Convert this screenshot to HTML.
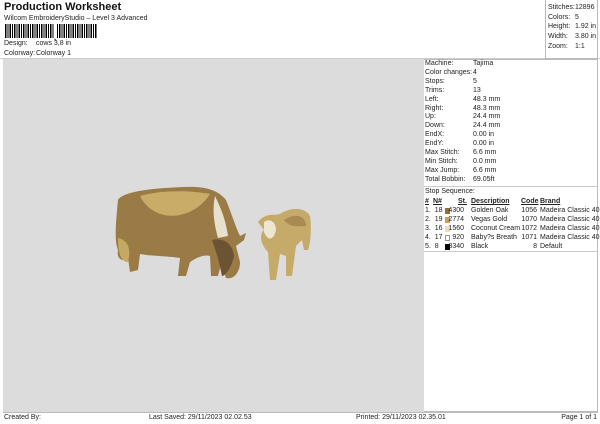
<!DOCTYPE html>
<html><head><meta charset="utf-8"><style>
*{margin:0;padding:0;box-sizing:border-box}
body{width:600px;height:424px;background:#fff;font-family:"Liberation Sans",Arial,sans-serif;color:#222;position:relative;overflow:hidden;font-size:7px}
.a{position:absolute;white-space:nowrap}
.grey{position:absolute;left:3px;top:59px;width:421px;height:353px;background:#dcdcdc}
.panel{position:absolute;left:424px;top:59px;width:174px;height:353px;border:1px solid #bbb;border-left:none;background:#fff}
.tr{position:absolute;left:545px;top:0;width:53px;height:59px;border-left:1px solid #bbb;border-right:1px solid #bbb;border-bottom:1px solid #bbb}
.sw{display:inline-block;width:5px;height:6px;position:absolute;top:1px;left:21px}
</style></head><body>
<div class="a" style="left:4px;top:1px;font-size:11px;font-weight:bold;color:#111">Production Worksheet</div>
<div class="a" style="left:4px;top:15px;font-size:7px">Wilcom EmbroideryStudio – Level 3 Advanced</div>
<div class="a" style="left:5px;top:24px;width:92px;height:14px;background:repeating-linear-gradient(90deg,#000 0 1.5px,#fff 1.5px 2.5px,#000 2.5px 3.5px,#fff 3.5px 4.5px)"></div>
<div class="a" style="left:54px;top:24px;width:3px;height:14px;background:#fff"></div>
<div class="a" style="left:54px;top:33px;font-size:8px;font-weight:bold">,</div>
<div class="a" style="left:4px;top:40px">Design:</div><div class="a" style="left:36px;top:40px">cows 3,8 in</div>
<div class="a" style="left:4px;top:50px">Colorway:</div><div class="a" style="left:36px;top:50px">Colorway 1</div>
<div style="position:absolute;left:0;top:58px;width:600px;height:1px;background:#ccc"></div>
<div class="tr"></div>
<div class="a" style="left:548px;top:3px;line-height:9.7px">Stitches:<br>Colors:<br>Height:<br>Width:<br>Zoom:</div>
<div class="a" style="left:575px;top:3px;line-height:9.7px">12896<br>5<br>1.92 in<br>3.80 in<br>1:1</div>
<div class="grey">
<svg width="421" height="353" style="position:absolute;left:0;top:0">
<g transform="translate(-3,-59)">
<path d="M118,200 C122,192 150,188 185,187 C205,186 218,190 226,200 C232,215 236,228 240,236 L246,233 L244,240 L236,246 L240,262 C240,272 234,280 226,278 L221,264 L218,276 L211,276 L210,256 C204,254 196,258 190,262 L186,276 L178,276 L180,258 C168,256 150,256 140,254 L138,270 L130,272 L128,258 C124,262 116,260 118,250 C114,240 116,222 118,200 Z" fill="#9a7a45"/>
<path d="M140,196 C160,190 190,190 210,194 C200,210 180,220 160,214 C150,210 144,204 140,196 Z" fill="#c9ac67"/>
<path d="M215,196 C222,210 226,222 228,236 L218,238 C214,224 212,210 215,196 Z" fill="#e7e0cc"/>
<path d="M118,238 C126,240 132,246 128,262 C122,262 118,256 118,238 Z" fill="#c5a862"/>
<path d="M212,240 C220,238 232,240 234,256 C232,266 226,276 222,276 L218,258 Z" fill="#6b5333"/>
<path d="M258,222 C266,212 274,216 280,214 C292,206 306,208 310,216 C312,230 310,246 308,250 L304,250 L302,240 L296,246 L292,276 L286,276 L286,256 L280,254 L276,280 L270,280 L268,252 C262,246 258,236 264,230 Z" fill="#c6aa6a"/>
<path d="M264,222 C270,218 276,222 276,230 C274,240 268,242 264,232 Z" fill="#ece6d2"/>
<path d="M284,220 C296,212 306,216 306,226 C298,226 290,228 284,220 Z" fill="#a98a50"/>
</g></svg></div>
<div class="panel">
<div class="a" style="left:1px;top:0px;line-height:8.9px">Machine:<br>Color changes:<br>Stops:<br>Trims:<br>Left:<br>Right:<br>Up:<br>Down:<br>EndX:<br>EndY:<br>Max Stitch:<br>Min Stitch:<br>Max Jump:<br>Total Bobbin:</div>
<div class="a" style="left:49px;top:0px;line-height:8.9px">Tajima<br>4<br>5<br>13<br>48.3 mm<br>48.3 mm<br>24.4 mm<br>24.4 mm<br>0.00 in<br>0.00 in<br>6.6 mm<br>0.0 mm<br>6.6 mm<br>69.05ft</div>
<div style="position:absolute;left:0;top:126px;width:173px;height:1px;background:#ccc"></div>
<div class="a" style="left:1px;top:128px">Stop Sequence:</div>
<div class="a" style="left:1px;top:138px;font-weight:bold;text-decoration:underline">#</div>
<div class="a" style="left:9px;top:138px;font-weight:bold;text-decoration:underline">N#</div>
<div class="a" style="left:34px;top:138px;font-weight:bold;text-decoration:underline">St.</div>
<div class="a" style="left:47px;top:138px;font-weight:bold;text-decoration:underline">Description</div>
<div class="a" style="left:97px;top:138px;font-weight:bold;text-decoration:underline">Code</div>
<div class="a" style="left:116px;top:138px;font-weight:bold;text-decoration:underline">Brand</div>
<div style="position:absolute;left:0;top:147px;width:174px">
<div style="position:relative;height:9px"><span class="a" style="left:1px">1.&nbsp; 18</span><span class="sw" style="background:#9d6b35"></span><span class="a" style="right:134px">4300</span><span class="a" style="left:47px">Golden Oak</span><span class="a" style="right:61px">1056</span><span class="a" style="left:116px">Madeira Classic 40</span></div>
<div style="position:relative;height:9px"><span class="a" style="left:1px">2.&nbsp; 19</span><span class="sw" style="background:#c9a15a"></span><span class="a" style="right:134px">2774</span><span class="a" style="left:47px">Vegas Gold</span><span class="a" style="right:61px">1070</span><span class="a" style="left:116px">Madeira Classic 40</span></div>
<div style="position:relative;height:9px"><span class="a" style="left:1px">3.&nbsp; 16</span><span class="sw" style="background:#f1dcba"></span><span class="a" style="right:134px">1560</span><span class="a" style="left:47px">Coconut Cream</span><span class="a" style="right:61px">1072</span><span class="a" style="left:116px">Madeira Classic 40</span></div>
<div style="position:relative;height:9px"><span class="a" style="left:1px">4.&nbsp; 17</span><span class="sw" style="background:#fff;border:1px solid #999"></span><span class="a" style="right:134px">920</span><span class="a" style="left:47px">Baby?s Breath</span><span class="a" style="right:61px">1071</span><span class="a" style="left:116px">Madeira Classic 40</span></div>
<div style="position:relative;height:9px"><span class="a" style="left:1px">5.&nbsp; 8</span><span class="sw" style="background:#000"></span><span class="a" style="right:134px">3340</span><span class="a" style="left:47px">Black</span><span class="a" style="right:61px">8</span><span class="a" style="left:116px">Default</span></div>
</div>
<div style="position:absolute;left:0;top:191px;width:173px;height:1px;background:#ccc"></div>
</div>
<div style="position:absolute;left:3px;top:412px;width:595px;height:1px;background:#bbb"></div>
<div class="a" style="left:4px;top:414px">Created By:</div>
<div class="a" style="left:149px;top:414px">Last Saved: 29/11/2023 02.02.53</div>
<div class="a" style="left:356px;top:414px">Printed: 29/11/2023 02.35.01</div>
<div class="a" style="right:3px;top:414px">Page 1 of 1</div>
</body></html>
